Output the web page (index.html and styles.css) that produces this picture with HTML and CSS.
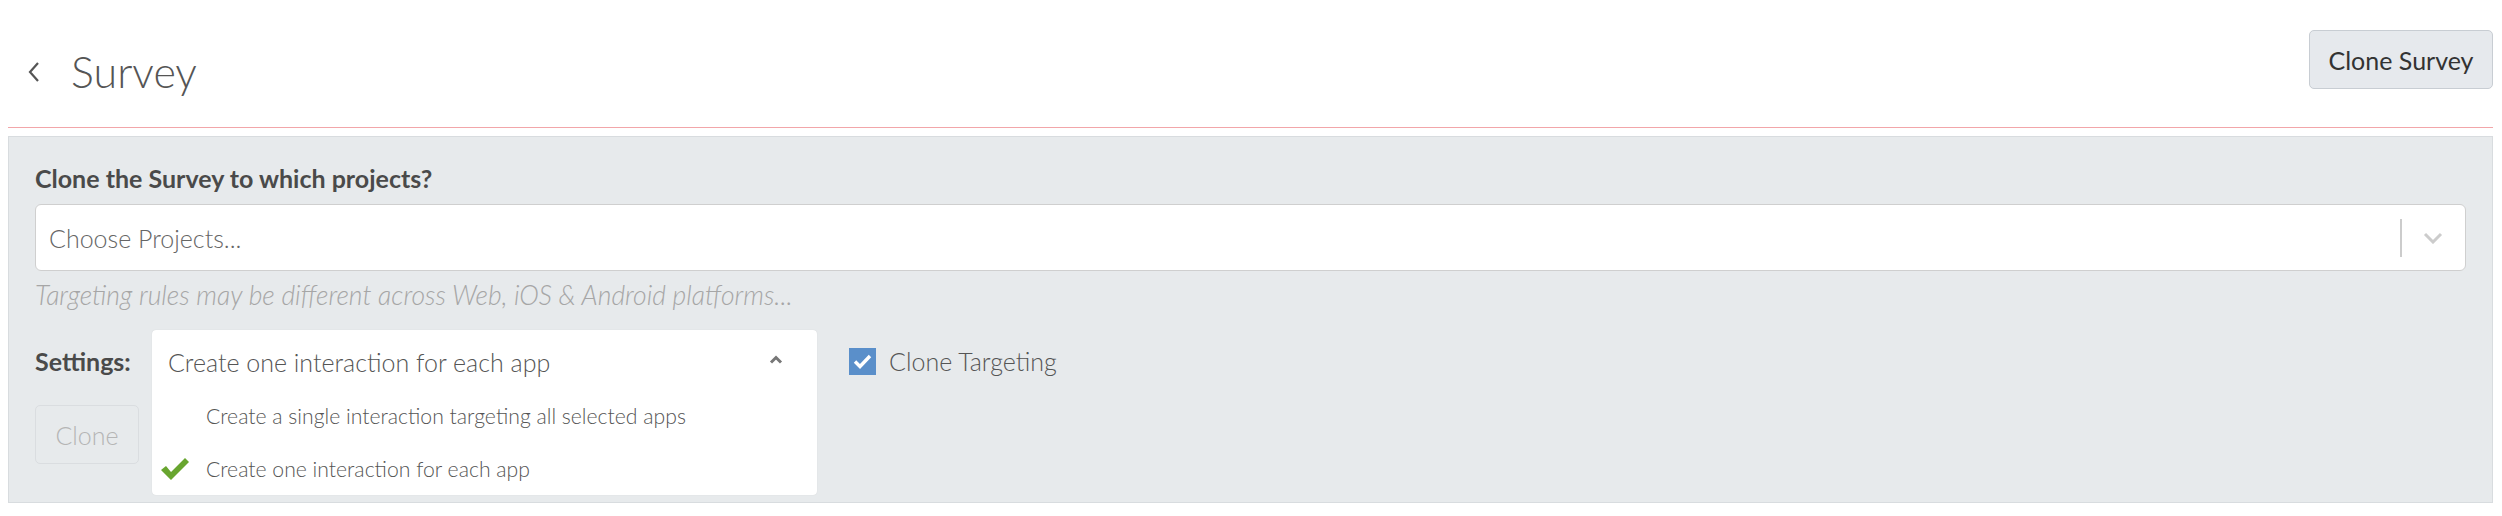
FILE: index.html
```html
<!DOCTYPE html>
<html>
<head>
<meta charset="utf-8">
<link rel="stylesheet" href="styles.css">
</head>
<body>
<div class="page">
  <header class="header">
    <div class="title">
      <svg class="back" width="14" height="22" viewBox="0 0 14 22"><polyline points="11,2 3,11 11,20" fill="none" stroke="#555" stroke-width="2.2"/></svg>
      <h1 class="title-text">Survey</h1>
    </div>
    <button class="btn-survey">Clone Survey</button>
  </header>
  <section class="panel">
    <div class="heading">Clone the Survey to which projects?</div>
    <div class="select">
      <span class="placeholder">Choose Projects...</span>
      <span class="sep"></span>
      <svg class="chev" width="20" height="12" viewBox="0 0 20 12"><polyline points="2,2 10,10 18,2" fill="none" stroke="#ccc" stroke-width="3"/></svg>
    </div>
    <div class="hint">Targeting rules may be different across Web, iOS &amp; Android platforms...</div>
    <div class="settings">
      <div class="left-col">
        <div class="label">Settings:</div>
        <button class="btn-clone">Clone</button>
      </div>
      <div class="dropdown">
        <div class="dd-head">
          <span>Create one interaction for each app</span>
          <svg class="caret" width="14" height="9" viewBox="0 0 14 9"><polyline points="2,7.5 7,2.5 12,7.5" fill="none" stroke="#777" stroke-width="3"/></svg>
        </div>
        <div class="dd-opt"><span class="ok"></span>Create a single interaction targeting all selected apps</div>
        <div class="dd-opt"><span class="ok"><svg width="30" height="24" viewBox="0 0 30 24"><path d="M1 13 L6 9 L11 15 L25 1 L29 5 L11 23 Z" fill="#68a52f"/></svg></span>Create one interaction for each app</div>
      </div>
      <label class="check">
        <span class="box"><svg width="27" height="27" viewBox="0 0 27 27"><polyline points="6,13.5 11,18.5 21,8" fill="none" stroke="#fff" stroke-width="3.4"/></svg></span>
        <span>Clone Targeting</span>
      </label>
    </div>
  </section>
</div>
</body>
</html>
```
FILE: styles.css
```css
* { box-sizing: border-box; }
html, body { margin: 0; padding: 0; background: #fff; }
body { font-family: Lato, "Open Sans", sans-serif; font-weight: 300; color: #555; }
.page { padding: 0 9px 0 8px; }
.header {
  display: flex;
  justify-content: space-between;
  align-items: flex-start;
  height: 128px;
  border-bottom: 1px solid #f2a6a9;
}
.title { display: flex; align-items: center; margin-top: 47px; padding-left: 19px; }
.back { margin-right: 30px; }
.title-text { margin: 0; font-weight: 300; font-size: 43px; line-height: 50px; color: #555; }
.btn-survey {
  margin-top: 30px;
  width: 184px;
  height: 59px;
  font-family: Lato, sans-serif;
  font-weight: 400;
  font-size: 25px;
  color: #333;
  background: #e6e9ed;
  border: 1px solid #c8cdd3;
  border-radius: 5px;
}
.panel {
  margin-top: 8px;
  background: #e7eaec;
  border: 1px solid #d8dcdf;
  padding: 27px 26px 7px 26px;
}
.heading { font-weight: 700; font-size: 25px; line-height: 29px; color: #4a4a4a; }
.select {
  margin-top: 11px;
  height: 67px;
  background: #fff;
  border: 1px solid #cfcfcf;
  border-radius: 6px;
  display: flex;
  align-items: center;
  padding-left: 13px;
  padding-right: 22px;
}
.placeholder { flex: 1; font-size: 25px; color: #666; }
.sep { width: 2px; height: 38px; background: #ccc; margin-right: 21px; }
.hint { margin-top: 11px; font-style: italic; font-size: 26.5px; line-height: 26px; color: #a6a6a6; }
.settings { display: flex; align-items: flex-start; margin-top: 22px; }
.left-col { width: 117px; display: flex; flex-direction: column; }
.label { font-weight: 700; font-size: 25px; line-height: 62px; color: #4a4a4a; }
.btn-clone {
  margin-top: 13px;
  width: 104px;
  height: 59px;
  font-family: Lato, sans-serif;
  font-weight: 300;
  font-size: 25px;
  color: #b5b5b5;
  background: #e7eaec;
  border: 1px solid #dadde0;
  border-radius: 5px;
}
.dropdown {
  width: 665px;
  background: #fff;
  border-radius: 4px;
  box-shadow: 0 0 1px rgba(0,0,0,0.15);
}
.dd-head {
  height: 59px;
  display: flex;
  align-items: center;
  justify-content: space-between;
  padding: 4px 34px 0 16px;
  font-size: 25px;
  color: #555;
}
.caret { margin-top: -4px; }
.dd-opt {
  height: 53px;
  display: flex;
  align-items: center;
  font-size: 21.2px;
  color: #555;
}
.ok { width: 54px; display: flex; justify-content: flex-end; padding-right: 16px; }
.check { display: flex; align-items: center; margin-left: 32px; margin-top: 16px; font-size: 25px; color: #555; }
.box { width: 27px; height: 27px; background: #5a8fca; margin-right: 13px; display: block; }
.box svg { display: block; }
```
